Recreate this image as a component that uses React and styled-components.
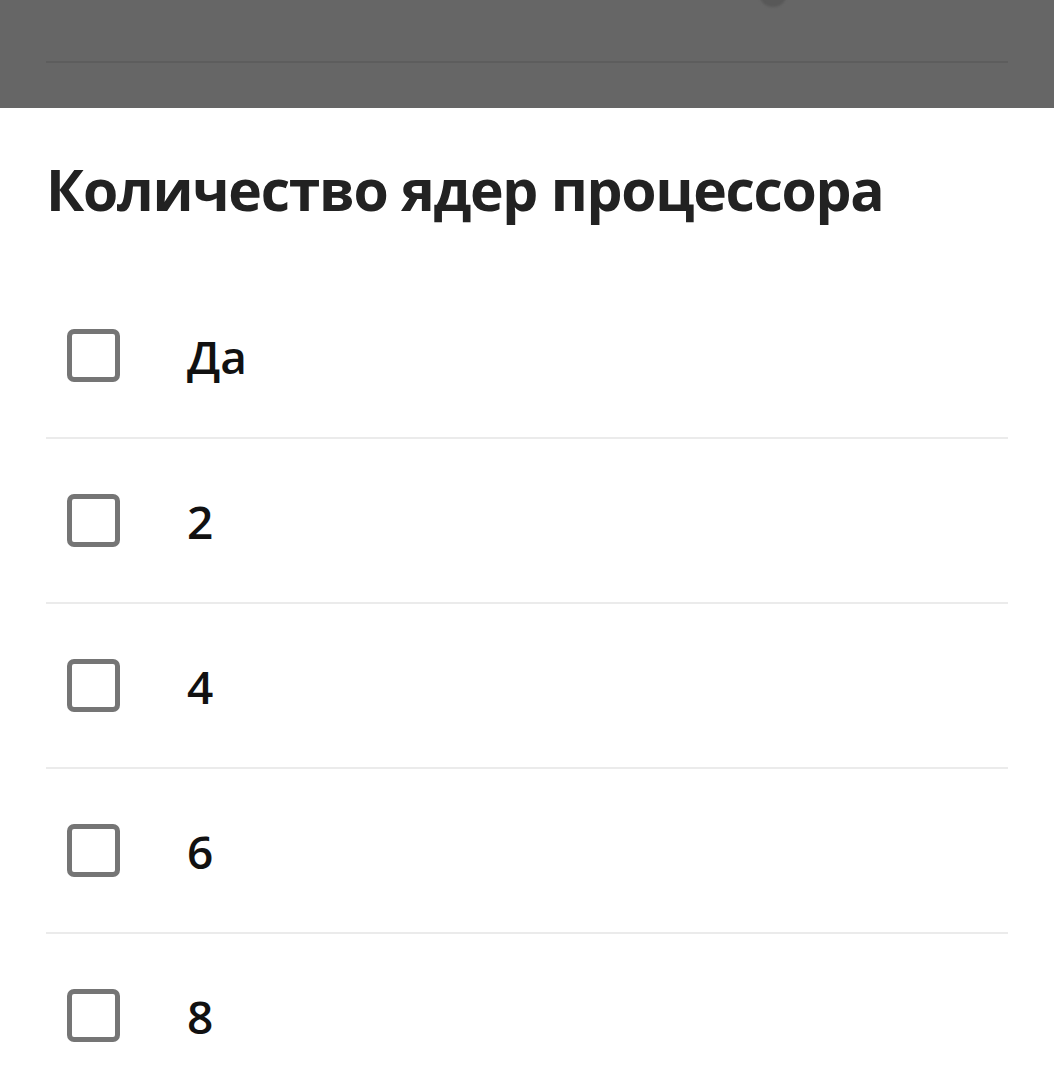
import React from "react";
import styled, { createGlobalStyle } from "styled-components";

const GlobalStyle = createGlobalStyle`
    html, body {
        margin: 0;
        padding: 0;
        background: #ffffff;
    }
    body {
        font-family: "Open Sans", "Noto Sans", sans-serif;
        -webkit-font-smoothing: antialiased;
    }
`;

const options = ["Да", "2", "4", "6", "8"];

const Checkbox = () => <Box aria-hidden="true" />;

const App = () => {
    return (
        <Page>
            <GlobalStyle />
            <Backdrop>
                <BackdropRow>
                    <Avatar />
                </BackdropRow>
            </Backdrop>
            <Sheet>
                <Title>Количество ядер процессора</Title>
                <List>
                    {options.map((label) => (
                        <Row key={label}>
                            <Checkbox />
                            <Label>{label}</Label>
                        </Row>
                    ))}
                </List>
            </Sheet>
        </Page>
    );
};

const Page = styled.div`
    width: 1054px;
    height: 1080px;
    overflow: hidden;
    display: flex;
    flex-direction: column;
`;

const Backdrop = styled.div`
    height: 108px;
    flex-shrink: 0;
    background: #666666;
    padding: 0 46px;
    box-sizing: border-box;
`;

const BackdropRow = styled.div`
    height: 61px;
    border-bottom: 2px solid #5d5d5d;
    display: flex;
    justify-content: flex-start;
    align-items: flex-start;
`;

const Avatar = styled.div`
    width: 28px;
    height: 28px;
    border-radius: 50%;
    background: #585858;
    filter: blur(1px);
    margin-left: 713px;
    transform: translateY(-21px);
`;

const Sheet = styled.div`
    flex: 1;
    background: #ffffff;
    padding: 0 46px;
    display: flex;
    flex-direction: column;
`;

const Title = styled.h1`
    margin: 0;
    padding: 47px 0 51px;
    font-size: 57px;
    line-height: 68px;
    font-weight: 700;
    color: #222222;
    letter-spacing: -1.3px;
`;

const List = styled.div`
    display: flex;
    flex-direction: column;
`;

const Row = styled.div`
    height: 163px;
    flex-shrink: 0;
    display: flex;
    align-items: center;
    padding-left: 21px;
    border-bottom: 2px solid #ebebeb;
`;

const Box = styled.span`
    width: 53px;
    height: 53px;
    box-sizing: border-box;
    border: 5px solid #757575;
    border-radius: 7px;
    flex-shrink: 0;
`;

const Label = styled.span`
    margin-left: 67px;
    font-size: 46px;
    font-weight: 600;
    color: #111111;
`;

export default App;
